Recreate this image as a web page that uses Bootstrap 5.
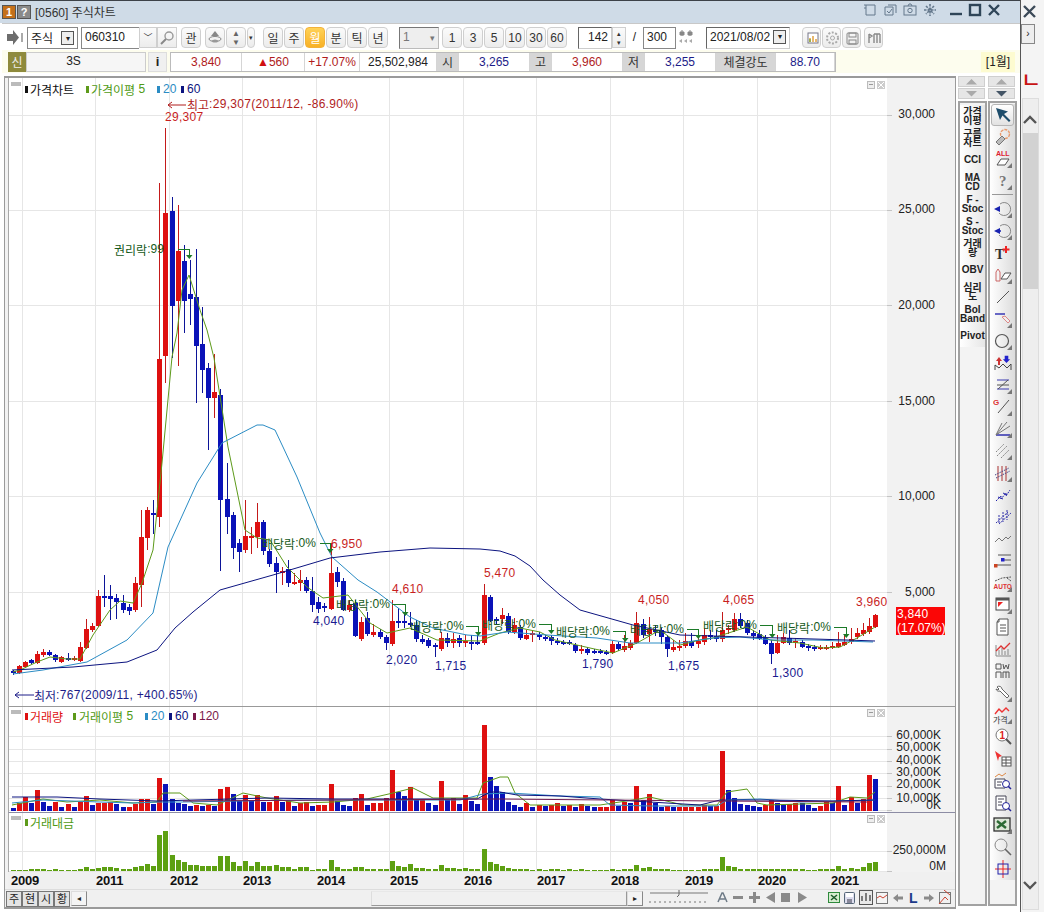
<!DOCTYPE html>
<html lang="ko">
<head>
<meta charset="UTF-8">
<title>[0560] 주식차트</title>
<link rel="stylesheet" href="https://cdn.jsdelivr.net/npm/bootstrap@5.3.0/dist/css/bootstrap.min.css">
<style>
  html, body { margin: 0; width: 1044px; height: 912px; overflow: hidden; background: #fff; }
  body, svg text { font-family: "Liberation Sans", "Noto Sans CJK KR", sans-serif; font-size: 12px; color: #222; }
  svg { display: block; }
  svg text { dominant-baseline: central; letter-spacing: 0; }
  svg text.wide { letter-spacing: 0.3px; }
  svg text tspan.ko { font-family: "Noto Sans CJK KR", sans-serif; font-size: 12px; letter-spacing: 0; }
  .ko { font-family: "Noto Sans CJK KR", sans-serif; font-size: 12px; letter-spacing: 0; }
  .win { width: 1021px; height: 912px; border-right: 1px solid #555; }
  .strip { width: 23px; height: 912px; background: #f4f4f4; }
  .title-bar { height: 23px; background: #cfdbe7; border-top: 1px solid #3d4248; padding: 0 2px; }
  .title-bar .caption { font-size: 12px; color: #333; margin-left: 3px; }
  .tb-box { width: 14px; height: 14px; font: bold 11px "Liberation Sans", sans-serif; color: #fff; text-align: center; line-height: 13px; margin-right: 1px; border: 1px solid #555; }
  .tb-one { background: #c4701a; }
  .tb-help { background: #8a8a8a; }
  .tool-row { height: 27px; padding: 3px 0 0 5px; border-top: 1px solid #c8c8c8; margin-left: 2px; }
  .t-btn { width: 20px; height: 21px; padding: 0; border: 1px solid #cfcfcf; border-radius: 4px; background: linear-gradient(#fbfbfb, #ececec); font-size: 12px; line-height: 18px; color: #333; flex: none; --bs-btn-hover-bg: #eee; }
  .t-on { background: linear-gradient(#ffd257, #f8b127); border-color: #f3b23a; color: #fff; }
  .t-field { height: 22px; border: 1px solid #888; background: #fff; flex: none; padding: 0 3px; line-height: 19px; color: #222; }
  .f-kind { width: 51px; margin-left: 3px; }
  .f-code { width: 58px; margin-left: 3px; border-right: 0; }
  .f-range { width: 40px; margin-left: 10px; background: #eee; color: #777; border-color: #777 #bbb #bbb #777; }
  .f-count { width: 34px; margin-left: 11px; text-align: right; border-color: #666 #ccc #ccc #666; }
  .f-total { width: 33px; text-align: left; }
  .f-date { width: 84px; margin-left: 12px; border-color: #666 #ccc #ccc #666; }
  .slash { width: 17px; text-align: center; line-height: 20px; flex: none; }
  .combo-arrow { width: 13px; height: 14px; border: 1px solid #555; background: #eee; font-size: 8px; line-height: 12px; text-align: center; margin-top: 3px; margin-left: auto; }
  .cell-gap-s { margin-left: 1px; }
  .info-row { height: 23px; padding: 2px 0 0 6px; margin-left: 2px; background: #fdfdee; }
  .sin { width: 18px; height: 20px; background: #8e8a3c; color: #eee; text-align: center; line-height: 19px; }
  .sin-name { width: 120px; height: 20px; background: #f6f6f6; border: 1px solid #ccc; text-align: center; line-height: 17px; padding-right: 25px; }
  .info-btn { width: 19px; height: 20px; margin: 0 3px 0 2px; background: #f0f0f0; border: 1px solid #ddd; font: bold 13px "Liberation Sans", sans-serif; text-align: center; line-height: 18px; }
  .info-grid { display: grid; grid-template-columns: 71px 63px 55px 77px 22px 71px 22px 71px 22px 71px 60px 59px; height: 20px; border: 1px solid #bbb; background: #fff; }
  .info-grid > div { text-align: center; line-height: 18px; border-right: 1px solid #d5d5d5; }
  .i-red { color: #b01c1c; }
  .i-blue { color: #1c1c88; }
  .i-head { background: #d6d6d6; color: #333; }
  .month-tag { width: 34px; height: 20px; margin-left: auto; margin-right: 5px; background: #fdfbd0; text-align: center; line-height: 18px; }
  .body-row { padding-left: 4px; height: 830px; margin-top: 3px; }
  .chart-frame { width: 952px; height: 833px; border: 1px solid #9a9a9a; border-width: 2px 1px 2px 1px; padding-left: 3px; background: #f2f2f2; }
  .pane-price { border-bottom: 1px solid #999; border-left: 1px solid #a8a8a8; }
  .pane-vol { border-bottom: 1px solid #8c8ca4; border-left: 1px solid #a8a8a8; }
  .pane-amt { border-left: 1px solid #a8a8a8; }
  .bottom-bar { height: 18px; margin-left: -3px; padding-left: 1px; background: #f0f0f0; border-top: 1px solid #ddd; }
  .tab-cell { width: 16px; height: 16px; border: 1px solid #777; background: #e4e4e4; text-align: center; line-height: 13px; font-size: 11px; flex: none; margin-right: -0px; }
  .h-scroll { width: 256px; height: 15px; margin-left: 284px; background: #f0f0f0; border: 1px solid #999; border-left-color: #ddd; border-top-color: #e8e8e8; flex: none; }
  .scroll-end { width: 16px; height: 15px; border: 1px solid #888; border-top-color: #ddd; border-left-color: #ddd; background: #f4f4f4; font-size: 8px; line-height: 13px; text-align: center; flex: none; }
  .tool-cols { margin-left: 2px; gap: 1px; }
  .tool-col { width: 29px; }
  .arrow-btn { width: 27px; height: 11px; background: #e6e6e6; border: 1px solid #cfcfcf; margin-bottom: 1px; }
  .col-body { height: 805px; margin-top: 2px; border: 2px solid #a2a2a2; background: #f3f3f3; }
  .ind-pad { padding-top: 2px; }
  .tool-pad { padding-top: 1px; }
  .ind-list { background: linear-gradient(90deg, #fff, #e6e6e6); }
  .ind-item { height: 22px; font: bold 10px/9.5px "Liberation Sans", "Noto Sans CJK KR", sans-serif; text-align: center; color: #222; }
  .tool-item { height: 22px; }
  .tool-sep { height: 4px; border-top: 1px solid #999; margin: 2px 2px 0; }
  .tool-list { background: linear-gradient(90deg, #fff, #dcdcdc); }
  .tool-on { background: linear-gradient(#fff, #e2e2e2); border: 1px solid #b5b5b5; border-radius: 3px; margin: 0 1px; }
  .s-close { height: 24px; padding-left: 1px; }
  .s-tab { width: 14px; height: 20px; border: 1px solid #888; font-size: 10px; line-height: 18px; text-align: center; background: #eee; }
  .s-red { height: 24px; margin-top: 24px; color: #c81414; font-family: "Noto Sans CJK KR", sans-serif; font-size: 22px; font-weight: 500; line-height: 20px; }
  .s-bar { width: 17px; height: 812px; margin-top: 6px; margin-left: 1px; background: #eee; border: 1px solid #ddd; }
  .s-thumb { height: 156px; margin-top: 7px; background: #d2d2d2; }
</style>
</head>
<body>
<div class="d-flex">
  <div class="win d-flex flex-column">
    <div class="title-bar d-flex align-items-center">
      <span class="tb-box tb-one">1</span><span class="tb-box tb-help">?</span>
      <span class="caption"><span>[0560]</span> <span class="ko">주식차트</span></span>
      <span class="ms-auto me-2" id="winIcons"></span>
    </div>

    <div class="tool-row d-flex">
      <svg width="17" height="21" viewBox="0 0 17 21"><path d="M0 7h6V3l6 7.500-6 7.500v-4H0z" fill="#6d6d6d"/><path d="M14 6v9h2V6z" fill="#aaa"/></svg>
      <div class="t-field f-kind ko d-flex">주식<span class="combo-arrow">▾</span></div>
      <div class="t-field f-code">060310</div>
      <button class="btn t-btn" style="width:18px;border-radius:0;font-size:9px">﹀</button>
      <button class="btn t-btn" style="width:20px;border-radius:0">
        <svg width="16" height="16" viewBox="0 0 16 16" class="mx-auto"><circle cx="10" cy="6" r="4" fill="none" stroke="#999" stroke-width="1.400"/><path d="M7 9l-5 5" stroke="#888" stroke-width="2"/></svg>
      </button>
      <button class="btn t-btn ko cell-gap-s ms-1">관</button>
      <button class="btn t-btn ms-1">
        <svg width="18" height="17" viewBox="0 0 18 17" class="mx-auto"><path d="M9 2l4 5H5z" fill="#888"/><ellipse cx="9" cy="10" rx="6" ry="2.500" fill="none" stroke="#888"/><ellipse cx="9" cy="12" rx="3" ry="1.500" fill="#999"/></svg>
      </button>
      <button class="btn t-btn cell-gap-s" style="font-size:8px;line-height:9px;color:#666">▲<br>▼</button>
      <button class="btn t-btn cell-gap-s" style="width:8px;font-size:7px">▾</button>
      <div class="d-flex gap-0 ms-2" id="periodBtns"></div>
      <div class="t-field f-range d-flex">1<span class="ms-auto" style="font-size:9px;line-height:20px">▾</span></div>
      <div class="d-flex" id="tickBtns"></div>
      <div class="t-field f-count">142</div>
      <button class="btn t-btn" style="width:14px;font-size:7px;line-height:9px;border-radius:0">▴<br>▾</button>
      <span class="slash">/</span>
      <div class="t-field f-total">300</div>
      <svg width="16" height="20" viewBox="0 0 16 20" style="margin-left:2px"><path d="M4 3v6M12 3v6M2 5h4v3H2zM10 5h4v3h-4z" stroke="#888" fill="#888"/><path d="M1 14l3-2v4zM6 14l3-2v4zM11 14l3-2v4z" fill="#aaa"/></svg>
      <div class="t-field f-date d-flex">2021/08/02<span class="combo-arrow" style="margin-top:2px">▾</span></div>
      <div class="d-flex gap-0" id="rightBtns" style="margin-left:12px"></div>
    </div>

    <div class="info-row d-flex">
      <div class="sin ko">신</div>
      <div class="sin-name">3S</div>
      <div class="info-btn">i</div>
      <div class="info-grid">
        <div class="i-red">3,840</div>
        <div class="i-red"><span style="color:#d01010">▲</span>560</div>
        <div class="i-red">+17.07%</div>
        <div>25,502,984</div>
        <div class="i-head ko">시</div>
        <div class="i-blue">3,265</div>
        <div class="i-head ko">고</div>
        <div class="i-red">3,960</div>
        <div class="i-head ko">저</div>
        <div class="i-blue">3,255</div>
        <div class="i-head ko">체결강도</div>
        <div class="i-blue">88.70</div>
      </div>
      <div class="month-tag">[<span class="ko">1월</span>]</div>
    </div>

    <div class="body-row d-flex">
      <div class="chart-frame">
        <div class="pane-price"><svg id="pricePane" width="946" height="628" viewBox="9 78 946 628"></svg></div>
        <div class="pane-vol"><svg id="volPane" width="946" height="105" viewBox="9 707 946 105"></svg></div>
        <div class="pane-amt"><svg id="amtPane" width="946" height="59" viewBox="9 813 946 59"></svg></div>
        <div><svg id="xAxis" width="947" height="17" viewBox="8 872 947 17"></svg></div>
        <div class="bottom-bar d-flex align-items-center">
          <div class="tab-cell ko">주</div><div class="tab-cell ko">현</div><div class="tab-cell ko">시</div><div class="tab-cell ko">황</div>
          <div class="scroll-end" style="margin-left:1px">◂</div>
          <div class="h-scroll"></div>
          <div class="scroll-end">▸</div>
          <svg width="312" height="17" viewBox="643 890 312 17" id="bottomIcons"></svg>
        </div>
      </div>
      <div class="tool-cols d-flex">
        <div class="tool-col">
          <div class="arrow-btn d-flex align-items-center justify-content-center"><svg width="11" height="6"><path d="M0 5.500L5.500 0 11 5.500z" fill="#aaa"/></svg></div>
          <div class="arrow-btn d-flex align-items-center justify-content-center"><svg width="11" height="6"><path d="M0 0h11L5.500 5.500z" fill="#aaa"/></svg></div>
          <div class="col-body ind-pad"><div class="ind-list" id="indList"></div></div>
        </div>
        <div class="tool-col">
          <div class="arrow-btn d-flex align-items-center justify-content-center"><svg width="11" height="6"><path d="M0 5.500L5.500 0 11 5.500z" fill="#aaa"/></svg></div>
          <div class="arrow-btn d-flex align-items-center justify-content-center"><svg width="11" height="6"><path d="M0 0h11L5.500 5.500z" fill="#456"/></svg></div>
          <div class="col-body tool-pad"><div class="tool-list" id="toolList"></div></div>
        </div>
      </div>
    </div>
  </div>

  <div class="strip">
    <div class="s-close"><svg width="18" height="22" viewBox="0 0 18 22"><path d="M2 6l11 11M13 6L2 17" stroke="#3c4a58" stroke-width="2.400"/></svg></div>
    <div class="s-tab">›</div>
    <div class="s-red">ㄴ</div>
    <div class="s-bar d-flex flex-column">
      <svg width="15" height="27" viewBox="0 0 15 27"><path d="M1 24l6-6 6 6" fill="none" stroke="#555" stroke-width="2.400"/></svg>
      <div class="s-thumb"></div>
      <svg width="15" height="14" viewBox="0 0 15 14" class="mt-auto mb-3"><path d="M1 3l6 6 6-6" fill="none" stroke="#555" stroke-width="2.400"/></svg>
    </div>
  </div>
</div>

<script>
  // candles: [high, bodyTop, bodyBottom, low, up] in screen y
  var candles = [
    [670,671,673,675,0],[665,666,673,674,1],[661,662,667,668,1],[659,660,663,664,0],[651,654,663,664,1],
    [649,652,655,657,1],[650,652,655,656,0],[654,655,660,662,0],[656,657,662,663,1],[653,658,660,661,0],
    [656,658,660,661,1],[642,647,661,662,1],[619,629,648,649,1],[623,626,630,632,1],[590,596,626,627,1],
    [575,596,597,607,0],[585,596,599,620,0],[594,598,602,619,0],[595,603,610,613,0],[604,607,611,615,0],
    [577,583,610,612,1],[510,537,585,607,1],[507,510,538,550,1],[500,513,514,534,0],[183,359,517,527,1],
    [128,213,356,383,1],[197,211,306,358,0],[205,251,301,366,1],[245,261,301,333,0],[260,294,299,325,0],
    [249,297,346,403,0],[307,344,370,393,0],[363,368,398,450,0],[354,392,398,418,1],[389,395,500,571,0],
    [463,499,517,534,0],[512,515,548,559,0],[539,543,552,572,0],[500,536,550,553,1],[527,536,537,554,1],
    [503,522,537,548,1],[520,522,551,555,0],[549,551,564,567,0],[557,563,572,593,0],[567,571,572,585,1],
    [560,569,583,587,0],[573,582,583,585,1],[570,580,583,591,1],[577,580,591,593,0],[577,591,605,612,0],
    [597,602,609,613,0],[603,606,608,612,0],[543,573,609,610,1],[567,572,582,587,0],[578,581,610,611,0],
    [600,605,610,612,1],[600,603,636,637,0],[617,622,639,641,1],[612,618,634,636,0],[624,632,635,637,1],
    [629,632,637,639,0],[635,637,643,650,0],[600,621,644,646,1],[608,621,622,628,0],[612,621,622,628,0],
    [612,623,625,627,0],[620,625,639,642,0],[635,639,642,644,0],[638,640,646,648,0],[643,645,647,657,0],
    [632,638,649,651,1],[633,638,643,647,0],[633,639,643,648,1],[635,638,643,647,0],[635,641,643,647,1],
    [635,642,643,650,0],[635,642,643,645,0],[584,595,643,645,1],[595,597,621,622,0],[617,619,621,624,0],
    [608,615,619,624,1],[613,616,632,634,0],[618,625,632,634,1],[625,627,638,640,0],[630,635,639,640,1],
    [630,633,634,642,1],[632,635,637,640,0],[635,637,639,641,0],[635,637,641,645,0],[638,641,642,645,0],
    [640,642,643,645,0],[640,642,643,645,0],[643,645,651,653,0],[645,649,650,654,1],[647,649,653,655,0],
    [649,651,652,654,0],[649,651,653,654,0],[650,652,653,655,0],[641,644,653,654,1],[642,644,649,651,0],
    [635,646,650,652,1],[640,643,648,650,1],[612,623,643,644,1],[619,624,635,638,0],[617,629,634,642,1],
    [625,630,632,636,0],[628,630,637,644,0],[635,637,649,657,0],[640,647,650,652,1],[640,646,648,651,1],
    [633,641,646,648,1],[633,641,646,648,0],[633,641,644,648,1],[628,635,642,645,1],[630,635,637,640,0],
    [630,636,639,642,0],[612,630,639,642,1],[625,628,630,634,1],[613,619,630,632,1],[613,619,626,628,0],
    [620,623,633,635,0],[630,633,636,640,0],[630,634,639,640,0],[635,638,644,645,0],[640,643,654,664,0],
    [635,643,653,654,1],[633,637,643,644,1],[630,638,643,645,0],[638,641,643,648,1],[640,642,647,648,0],
    [644,646,648,651,0],[645,647,649,651,0],[645,647,649,650,1],[645,647,648,650,1],[642,646,648,649,1],
    [632,643,647,648,1],[635,642,645,646,1],[628,639,642,644,1],[628,633,637,639,1],[623,630,634,636,1],
    [618,626,632,634,1],[614,615,627,628,1]
  ];
  // volume and amount bar tops, read at 3x from the screen
  var volTop = [353,340,320,338,300,335,348,335,350,343,350,336,318,345,338,338,335,342,350,350,343,327,327,342,264,282,327,340,343,348,344,348,346,348,297,291,312,333,315,333,315,335,335,318,335,333,348,340,335,348,345,345,282,333,345,348,325,312,345,340,340,325,240,306,318,291,330,330,340,345,273,330,325,342,316,333,342,105,261,288,305,336,345,350,338,350,346,348,346,340,347,346,350,342,349,352,352,352,330,349,336,340,288,330,312,339,350,347,352,352,352,352,352,344,349,349,183,300,324,343,345,348,350,346,330,340,345,343,339,340,344,354,347,335,338,288,345,322,340,326,255,266];
  var amtTop = [540,540,538,537,535,537,540,537,540,538,540,536,531,536,533,531,531,533,537,537,531,527,522,527,435,423,495,510,516,525,525,528,528,528,498,498,516,528,513,528,516,528,528,525,531,531,537,531,531,538,536,536,510,531,535,537,531,531,537,537,537,537,513,528,530,522,534,534,537,537,525,533,533,537,534,537,537,477,516,522,528,533,537,537,537,539,537,539,537,537,539,537,539,537,539,540,540,540,537,539,537,537,525,533,531,537,537,537,540,540,540,538,538,537,537,537,501,528,531,537,537,537,537,537,537,537,537,537,537,537,538,540,537,537,537,528,537,534,537,531,519,516];

  var RED = '#de1010', BLUE = '#0a12b8', GREEN = '#5d9a1a', SKY = '#2b8cc4', NAVY = '#0c1480', DKGREEN = '#155a20';
  var YEARS = [22,95,169,242,316,389,463,536,610,683,757,830];
  function xAt(i) { return Math.round(12.5 + 6.117 * i); }

  function txt(x, y, s, color, anchor, cls) {
    var body = s.replace(/([가-힣]+)/g, '<tspan class="ko">$1</tspan>');
    return '<text x="' + x + '" y="' + y + '" fill="' + (color || '#222') + '"' + (anchor ? ' text-anchor="' + anchor + '"' : '') + (cls ? ' class="' + cls + '"' : '') + '>' + body + '</text>';
  }
  function rect(x, y, w, h, fill) {
    return '<rect x="' + x + '" y="' + y + '" width="' + w + '" height="' + h + '" fill="' + fill + '" shape-rendering="crispEdges"/>';
  }
  function poly(pts, color, w) {
    return '<polyline fill="none" stroke="' + color + '" stroke-width="' + (w || 1) + '" points="' + pts.join(' ') + '"/>';
  }
  function grid(y0, y1, rows) {
    var s = '';
    YEARS.forEach(function (x) { s += rect(x, y0, 1, y1 - y0, '#e6e6e6'); });
    rows.forEach(function (y) { s += rect(9, y, 878, 1, '#e6e6e6'); s += rect(887, y, 5, 1, '#c4c4c4'); });
    return s;
  }
  function paneBase(x, y, h) { return rect(x, y, 879, h, '#fff') + rect(887, y, 68, h, '#f2f2f2'); }
  function paneBtns(y) {
    return '<g shape-rendering="crispEdges"><rect x="867.5" y="' + (y - 3.5) + '" width="7" height="7" fill="#eee" stroke="#bbb"/><rect x="869" y="' + (y - 1) + '" width="4" height="1" fill="#999"/>' +
      '<rect x="877" y="' + (y - 4) + '" width="8" height="8" fill="#ccc"/><path d="M878 ' + (y - 3) + 'l6 6m0-6l-6 6" stroke="#fff"/></g>';
  }

  // price pane
  var p = paneBase(8, 78, 628) + grid(78, 706, [115, 210, 305, 401, 496, 592]);
  candles.forEach(function (c, i) {
    var x = xAt(i), col = c[4] ? RED : BLUE;
    p += rect(x, c[0], 1, c[3] - c[0], c[4] ? '#c41a1a' : '#0c1498');
    p += rect(x - 2, c[1], 5, Math.max(c[2] - c[1], 2), col);
  });
  p += poly(['13,672','20,670','37,662','50,657','67,659','80,659','93,635','110,610','120,601','133,603','142,583','153,550','162,463','172,357','177,333','182,290','189,275','200,310','207,330','214,358','228,447','245,530','257,538','270,540','287,567','307,587','323,598','348,595','370,623','387,633','410,628','437,640','480,641','500,633','520,628','540,632','555,640','590,648','613,653','637,643','660,630','680,645','700,640','713,638','747,627','770,640','800,643','823,648','840,647','857,638','875,627'], GREEN);
  p += poly(['13,674','43,670','87,662','127,640','153,613','168,547','197,483','222,443','257,425','263,425','275,430','283,447','297,477','320,533','332,557','358,580','377,592','410,617','433,628','467,635','480,636','507,632','547,635','597,638','630,643','680,643','713,638','740,637','773,640','813,640','873,642'], SKY);
  p += poly(['12,670','73,667','127,662','157,650','175,628','193,612','220,590','273,575','330,558','380,552','430,548','480,549','500,551','515,556','530,566','543,580','560,595','580,610','633,625','680,635','747,637','847,640','875,641'], NAVY);

  p += rect(11, 82, 10, 4, '#bbb');
  p += rect(25, 86, 3, 7, '#111') + txt(30, 89, '가격차트', '#111');
  p += rect(86, 86, 3, 7, GREEN) + txt(91, 89, '가격이평 5', '#4f9a14');
  p += rect(157, 86, 3, 7, SKY) + txt(163, 89, '20', SKY);
  p += rect(181, 86, 3, 7, NAVY) + txt(187, 89, '60', NAVY);
  p += paneBtns(85);

  // high / low call-outs
  p += '<path d="M168 105h18M168 105l4-3M168 105l4 3" stroke="#b01c1c" fill="none"/>' + txt(187, 104, '최고:29,307(2011/12, -86.90%)', '#b01c1c', '', 'wide');
  p += '<path d="M15 695h19M15 695l4-3M15 695l4 3" stroke="#1c1c88" fill="none"/>' + txt(34, 695, '최저:767(2009/11, +400.65%)', '#1c1c88', '', 'wide');
  [[165,117,'29,307'],[331,544,'6,950'],[392,589,'4,610'],[484,573,'5,470'],[638,600,'4,050'],[723,600,'4,065'],[856,602,'3,960']].forEach(function (a) {
    p += txt(a[0], a[1], a[2], '#c81e1e', '', 'wide');
  });
  [[313,621,'4,040'],[386,660,'2,020'],[435,666,'1,715'],[582,664,'1,790'],[668,666,'1,675'],[772,673,'1,300']].forEach(function (a) {
    p += txt(a[0], a[1], a[2], '#1a1a90', '', 'wide');
  });
  // dividend markers: text x, text y, label, connector start, arrow x, arrow y
  [[262,543,'배당락:0%',320,330,552],[336,604,'배당락:0%',392,405,615],[410,626,'배당락:0%',466,478,635],[482,624,'배당락:0%',539,551,633],[556,631,'배당락:0%',613,625,641],[630,629,'배당락:0%',687,698,638],[703,625,'배당락:0%',760,772,637],[777,627,'배당락:0%',834,846,637],[114,249,'권리락:99',178,189,258]].forEach(function (d) {
    p += txt(d[0], d[1], d[2], DKGREEN);
    p += '<path d="M' + d[3] + ' ' + d[1] + 'H' + d[4] + 'V' + (d[5] - 3) + '" fill="none" stroke="#1c7a28" shape-rendering="crispEdges"/>';
    p += '<path d="M' + (d[4] - 3) + ' ' + (d[5] - 3) + 'h6.5l-3.2 4z" fill="#1c7a28"/>';
  });
  // y axis
  [[114,'30,000'],[209,'25,000'],[305,'20,000'],[401,'15,000'],[496,'10,000'],[592,'5,000']].forEach(function (a) {
    p += txt(935, a[0], a[1], '#222', 'end');
  });
  p += rect(896, 607, 49, 28, '#fb0606') + txt(897, 614, '3,840', '#fff', '', 'wide') + txt(897, 628, '(17.07%)', '#fff');
  document.getElementById('pricePane').innerHTML = p;

  // volume pane
  var v = paneBase(8, 707, 105) + grid(707, 812, [736, 749, 761, 773, 786, 798, 810]);
  volTop.forEach(function (t, i) {
    var h = Math.round((363 - t) / 3), up = i === 0 ? 0 : t <= volTop[i - 1];
    v += rect(xAt(i) - 2, 811 - h, 5, h, up ? RED : BLUE);
  });
  v += poly(['12,805','43,799','67,802','100,800','133,803','157,802','163,793','180,793','193,803','217,805','243,793','267,798','300,803','333,802','367,799','393,793','413,788','433,798','477,798','483,783','500,777','508,777','515,793','530,805','600,805','633,800','650,797','683,805','717,805','727,792','747,789','757,803','767,805','833,803','850,797','867,798','875,792'], GREEN);
  v += poly(['12,803','43,800','100,802','133,803','157,802','183,802','300,800','460,800','483,794','510,793','560,796','600,797','610,805','650,806','717,806','727,800','760,799','800,802','875,800'], SKY);
  v += poly(['12,797','57,797','100,799','157,801','267,798','333,799','477,799','490,792','500,792','517,795','560,796','600,799','700,805','720,800','767,800','833,801','875,800'], NAVY);
  v += poly(['183,801','500,799','717,801','867,802'], '#6e1a50');
  v += rect(11, 710, 10, 4, '#bbb');
  v += rect(25, 713, 3, 7, RED) + txt(30, 716, '거래량', RED);
  v += rect(73, 713, 3, 7, GREEN) + txt(79, 716, '거래이평 5', '#4f9a14');
  v += rect(145, 713, 3, 7, SKY) + txt(151, 716, '20', SKY);
  v += rect(169, 713, 3, 7, NAVY) + txt(175, 716, '60', NAVY);
  v += rect(193, 713, 3, 7, '#7a1a4a') + txt(199, 716, '120', '#7a1a4a');
  v += paneBtns(713);
  [[735,'60,000K'],[747,'50,000K'],[760,'40,000K'],[772,'30,000K'],[784,'20,000K'],[798,'10,000K'],[805,'0K']].forEach(function (a) {
    v += txt(941, a[0], a[1], '#222', 'end');
  });
  document.getElementById('volPane').innerHTML = v;

  // amount pane
  var m = paneBase(8, 813, 59) + grid(813, 872, [851, 871]);
  amtTop.forEach(function (t, i) {
    var h = Math.round((542 - t) / 3);
    m += rect(xAt(i) - 2, 871 - h, 5, h, '#5da012');
  });
  m += rect(11, 816, 10, 4, '#bbb') + rect(25, 819, 3, 7, GREEN) + txt(30, 822, '거래대금', '#4f9a14');
  m += paneBtns(819);
  m += txt(946, 850, '250,000M', '#222', 'end') + txt(946, 866, '0M', '#222', 'end');
  document.getElementById('amtPane').innerHTML = m;

  // year axis
  var yrs = rect(8, 872, 947, 17, '#f0f0f0');
  [[11,'2009'],[96,'2011'],[170,'2012'],[243,'2013'],[317,'2014'],[390,'2015'],[464,'2016'],[537,'2017'],[611,'2018'],[685,'2019'],[758,'2020'],[831,'2021']].forEach(function (a) {
    yrs += '<text x="' + a[0] + '" y="880" fill="#111" style="font:bold 13px \'Liberation Sans\',sans-serif;letter-spacing:-0.2px">' + a[1] + '</text>';
  });
  document.getElementById('xAxis').innerHTML = yrs;

  // bottom right controls
  var b = '<path d="M650 893h58M650 903v-2M655 903v-2M660 903v-2M665 903v-2M670 903v-2M675 903v-2M680 903v-2M685 903v-2M690 903v-2M695 903v-2M700 903v-2M705 903v-2" stroke="#777" fill="none"/><path d="M679 889v6l-2 2" stroke="#666" fill="none"/>';
  b += '<path d="M718 902l4-9h1l4 9m-7-3h5" stroke="#6d7a86" stroke-width="1.5" fill="none"/>';
  b += rect(733, 896, 10, 3, '#8a8a8a');
  b += '<path d="M749 896h4v-4h3v4h4v3h-4v4h-3v-4h-4z" fill="#8a8a8a"/>';
  b += '<path d="M775 892v11l-9-5.500z" fill="#8a8a8a"/>' + rect(781, 893, 9, 9, '#8a8a8a') + '<path d="M798 892v11l9-5.500z" fill="#8a8a8a"/>';
  b += '<rect x="828.5" y="892.5" width="11" height="10" fill="#d6ecd0" stroke="#2e8a3c"/><path d="M831 895l6 5m0-5l-6 5" stroke="#1c5a2a" stroke-width="1.5"/>';
  b += '<rect x="844.5" y="892.5" width="10" height="11" fill="#dde" stroke="#567" rx="1"/>' + rect(846, 893, 7, 4, '#fff') + rect(847, 899, 5, 4, '#889');
  b += '<rect x="859.5" y="890.5" width="13" height="14" fill="#e8e8e8" stroke="#555"/><path d="M862 901v-5M866 901v-8M870 901v-6" stroke="#555" stroke-width="1.5"/>';
  b += '<rect x="876.5" y="892.5" width="11" height="11" fill="#f4f4f4" stroke="#777"/><path d="M877 898l3-2 3 2 4-3" stroke="#c43" fill="none"/>';
  b += '<path d="M893 898l5-4v2.500h5v3h-5v2.500z" fill="#8a8a8a"/>';
  b += '<text x="909" y="898" style="font:bold 14px \'Liberation Sans\',sans-serif;letter-spacing:0" fill="#1c3a8a">L</text>';
  b += '<path d="M934 898l-5-4v2.500h-5v3h5v2.500z" fill="#8a8a8a"/>';
  b += '<rect x="939.5" y="892.5" width="11" height="11" fill="none" stroke="#777"/><path d="M939 904l6-7 3 3M944 890l6 5" stroke="#c43" fill="none"/>';
  document.getElementById('bottomIcons').innerHTML = b;

  // toolbar buttons
  document.getElementById('periodBtns').innerHTML = ['일','주','월','분','틱','년'].map(function (t) {
    return '<button class="btn t-btn ko' + (t === '월' ? ' t-on' : '') + '" style="margin-right:1px">' + t + '</button>';
  }).join('');
  document.getElementById('tickBtns').innerHTML = ['1','3','5','10','30','60'].map(function (t, i) {
    return '<button class="btn t-btn" style="margin-left:' + (i ? 1 : 3) + 'px">' + t + '</button>';
  }).join('');
  document.getElementById('rightBtns').innerHTML = [
    '<rect x="5" y="4" width="10" height="10" fill="#fff" stroke="#778"/><path d="M7 13V9M10 13V7M13 13V10" stroke="#e0a040" stroke-width="1.5"/><path d="M7 13V10" stroke="#5a3"/>',
    '<circle cx="9.5" cy="9" r="5.5" fill="none" stroke="#aaa" stroke-width="2" stroke-dasharray="2 1.5"/><circle cx="9.5" cy="9" r="2" fill="none" stroke="#aaa"/>',
    '<rect x="4" y="4" width="11" height="11" fill="none" stroke="#888" rx="1"/><rect x="6" y="4" width="7" height="4" fill="none" stroke="#888"/><rect x="6" y="11" width="7" height="4" fill="none" stroke="#888"/>',
    '<path d="M4 5v9M4 5l3 2-3 2M9 5v9M9 5h6M12 5v9M15 5v9" stroke="#888" fill="none" stroke-width="1.400"/>'
  ].map(function (s, i) {
    return '<button class="btn t-btn" style="width:19px;margin-right:' + (i === 2 ? 3 : 1) + 'px"><svg width="18" height="18" viewBox="0 0 18 18" class="mx-auto">' + s + '</svg></button>';
  }).join('');
  document.getElementById('winIcons').innerHTML = '<span class="d-inline-flex align-items-center gap-1">' + [
    '<path d="M4 3h9v10H4zM2 3h2M2 6h2" fill="none" stroke="#64788c"/>',
    '<path d="M3 5h8v8H3zM6 3h8v8" fill="none" stroke="#64788c"/><path d="M5 9l2 2 3-4" fill="none" stroke="#64788c"/>',
    '<rect x="2" y="4" width="12" height="9" fill="none" stroke="#64788c"/><circle cx="8" cy="8.500" r="2.200" fill="none" stroke="#64788c"/><path d="M6 4l1-2h2l1 2" fill="none" stroke="#64788c"/>',
    '<path d="M8 2v12M2 8h12M4 4l8 8M12 4l-8 8" stroke="#64788c" stroke-width="1.600" stroke-dasharray="2.500 1"/>'
  ].map(function (s) { return '<svg width="16" height="16" viewBox="0 0 16 16">' + s + '</svg>'; }).join('') +
    '<svg width="60" height="14" viewBox="0 0 60 14" class="ms-2"><path d="M0 11h12" stroke="#2f4558" stroke-width="2.400"/><rect x="20" y="2" width="10" height="10" fill="none" stroke="#2f4558" stroke-width="2.400"/><path d="M39 2l10 10M49 2L39 12" stroke="#2f4558" stroke-width="2.400"/></svg></span>';

  // indicator column
  document.getElementById('indList').innerHTML = [['가격','이평'],['구름','차트'],['CCI'],['MA','CD'],['F -','Stoc'],['S -','Stoc'],['거래','량'],['OBV'],['심리','도'],['Bol','Band'],['Pivot']].map(function (t) {
    return '<div class="ind-item d-flex flex-column justify-content-center">' + t.map(function (l) { return '<span>' + l + '</span>'; }).join('') + '</div>';
  }).join('');

  // drawing tool column
  var corner = '<path d="M19 19h-5l5-5z" fill="#777"/>';
  var tools = [
    '<path d="M3 3l4 12 2.500-4.500L16 17l1.500-1.500-6.500-6.500L15 6.500z" fill="#1e4d6b"/>',
    '<circle cx="12" cy="7" r="4.500" fill="none" stroke="#e89a6c" stroke-width="1.400" stroke-dasharray="3 1"/><path d="M3 15l6-6 3 3-6 6z" fill="#bbb" stroke="#777"/>',
    '<text x="3" y="4" style="font:bold 7px \'Liberation Sans\',sans-serif;letter-spacing:0" fill="#d23">ALL</text><path d="M4 16l4-6h8l-4 6z" fill="#fff" stroke="#555"/>' + corner,
    '<text x="6" y="10" style="font:bold 15px \'Liberation Serif\',serif;letter-spacing:0" fill="#777">?</text>' + corner,
    'sep',
    '<path d="M7 5a6.500 6.500 0 1 1-1 9" fill="none" stroke="#888"/><path d="M1 10l6-3v6z" fill="#1822b0"/>' + corner,
    '<path d="M7 5a6.500 6.500 0 1 1-1 9" fill="none" stroke="#888"/><path d="M1 10l6-3v6z" fill="#1822b0"/><circle cx="7" cy="10" r="1" fill="#1822b0"/>' + corner,
    '<text x="2" y="11" style="font:bold 14px \'Liberation Serif\',serif;letter-spacing:0" fill="#333">T</text><path d="M12 3h2v2.500h2.500v2H14V10h-2V7.500H9.500v-2H12z" fill="#e22"/>',
    '<path d="M3 7l2-3 2 3v9H3z" fill="#f4f4f4" stroke="#c66"/><path d="M8 14l4-6h6l-4 6z" fill="#fff" stroke="#555"/>' + corner,
    '<path d="M4 16L16 4" stroke="#555"/>',
    '<path d="M2 5h10" stroke="#2a2ab0" stroke-width="1.400"/><path d="M9 8l3-1 5 5-2 2z" fill="#eee" stroke="#d88"/>' + corner,
    '<circle cx="9" cy="10" r="6.500" fill="none" stroke="#555" stroke-width="1.200"/>' + corner,
    '<path d="M3 8l3-4 3 4H7v4H5V8z" fill="#c33"/><path d="M11 3h4v4h2l-4 4-4-4h2z" fill="#22c" transform="scale(.9) translate(2 0)"/><path d="M2 17v-5l4 3 4-4 4 4 4-4v6" fill="none" stroke="#444"/>',
    '<path d="M4 5h12M4 14h12" stroke="#3a3ab0" stroke-width="1.200"/><path d="M4 10h12M15 5L5 14" stroke="#555" fill="none"/>' + corner,
    '<text x="0" y="5" style="font:bold 8px \'Liberation Sans\',sans-serif;letter-spacing:0" fill="#d33">G</text><path d="M5 16L16 3" stroke="#555"/>' + corner,
    '<path d="M3 16h14" stroke="#22a" stroke-width="1.400"/><path d="M3 16L14 3M3 16L17 7M3 16L9 4" stroke="#777" fill="none"/>' + corner,
    '<path d="M3 11l8-8M4 15l10-10M8 17l8-8" stroke="#888" stroke-dasharray="2 1" fill="none"/>' + corner,
    '<path d="M5 3v15M9 3v15M13 3v15" stroke="#a33"/><path d="M2 12L16 5M3 15L17 8" stroke="#448" stroke-dasharray="1.500 1" fill="none"/>' + corner,
    '<path d="M3 16l5-5v3l5-6v3l4-6" stroke="#22a" stroke-dasharray="2 1" fill="none"/><path d="M5 12l5 2M10 8l4 2" stroke="#22a"/>',
    '<path d="M3 16L15 5M6 17L18 6M6 8v9M10 5v10M14 3v10" stroke="#33a" stroke-dasharray="2 1" fill="none"/>',
    '<path d="M2 13l4-4 3 3 4-4 2 2 3-3" stroke="#777" fill="none"/>',
    '<path d="M5 4h13M8 9h10M2 14h16" stroke="#555"/><rect x="8" y="7" width="3.500" height="3.500" fill="#22c"/><rect x="1" y="13" width="3.500" height="3.500" fill="#c42"/>',
    '<path d="M2 8l7-3 9-1M14 5l4 3" stroke="#555" stroke-dasharray="2 1" fill="none"/><text x="0.5" y="13" style="font:bold 6.500px \'Liberation Sans\',sans-serif;letter-spacing:0" fill="#d33">AUTO</text>' + corner,
    '<rect x="3" y="3" width="13" height="12" fill="#fff" stroke="#444"/><rect x="3" y="3" width="13" height="2.500" fill="#555"/><path d="M5 7h5l-5 5z" fill="#e22"/>' + corner,
    '<path d="M6 2h9v16H4V5zM6 2v3H4M7 8h6M7 11h6M7 14h6" fill="#fff" stroke="#555"/>',
    '<path d="M3 17V6M3 17h15M6 16v-5M9 16v-7M12 16v-4M15 16v-6" stroke="#888" fill="none"/><path d="M3 12l5-5 3 3 6-6" stroke="#d33" fill="none" stroke-width="1.300"/>',
    '<path d="M3 3h5v5H3zM10 3l1 5 2-4 2 4 1-5M3 11v6M3 11h5v6M10 11v6M10 11h6v6M13 11v6" stroke="#555" fill="none"/>',
    '<path d="M4 4a3 3 0 0 1 5 2l7 7-2 2-7-7a3 3 0 0 1-4-2l2 1 1-1z" fill="#fff" stroke="#666"/>' + corner,
    '<path d="M2 9l4-5 3 3 4-4 3 3" stroke="#e33" fill="none" stroke-width="1.400"/><text x="0" y="14" style="font:8px \'Noto Sans CJK KR\',sans-serif;letter-spacing:0" fill="#333">가격</text>' + corner,
    '<circle cx="9" cy="8" r="6" fill="#fff" stroke="#777"/><text x="6.500" y="8" style="font:bold 10px \'Liberation Sans\',sans-serif;letter-spacing:0" fill="#d22">1</text><path d="M13 12l5 5" stroke="#555" stroke-width="2"/>',
    '<path d="M2 2l7 5-3 1-1 4z" fill="#e33"/><rect x="9" y="8" width="9" height="9" fill="#fff" stroke="#555"/><path d="M9 11h9M9 14h9M13 8v9" stroke="#555"/>',
    '<path d="M2 6l4-3 3 2 4-3" stroke="#d84" fill="none"/><path d="M2 8h10v9H2zM4 11h5M4 14h4" fill="#fff" stroke="#445"/><circle cx="13" cy="13" r="3.500" fill="#fff" stroke="#229"/><path d="M15 15l3 3" stroke="#229" stroke-width="1.500"/>',
    '<path d="M3 3h10v14H3zM5 6h6M5 9h4M5 12h4" fill="#fff" stroke="#445"/><circle cx="13" cy="13" r="3.500" fill="#fff" stroke="#229"/><path d="M15 15l3 3" stroke="#229" stroke-width="1.500"/>',
    '<rect x="1" y="3" width="16" height="13" fill="#dde6d8" stroke="#333" stroke-width="1.300"/><path d="M4 6l9 7M13 6l-9 7" stroke="#2c6a34" stroke-width="2.400"/>' + corner,
    '<circle cx="8" cy="8" r="6" fill="none" stroke="#888"/><path d="M12 12l6 6" stroke="#666" stroke-width="1.600"/>',
    '<path d="M10 1v18M2 10h16" stroke="#e22"/><rect x="5" y="5" width="10" height="10" fill="none" stroke="#22a"/>'
  ];
  document.getElementById('toolList').innerHTML = tools.map(function (s, i) {
    if (s === 'sep') return '<div class="tool-sep"></div>';
    return '<div class="tool-item' + (i === 0 ? ' tool-on' : '') + ' d-flex align-items-center justify-content-center"><svg width="20" height="20" viewBox="0 0 20 20" style="overflow:hidden">' + s + '</svg></div>';
  }).join('');
</script>
</body>
</html>
